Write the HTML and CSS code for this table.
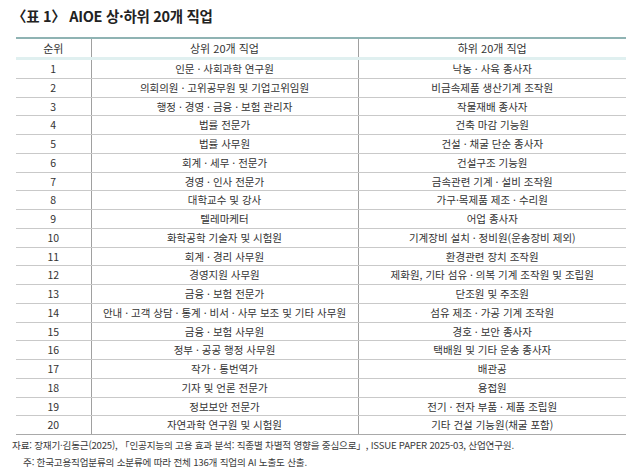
FILE: index.html
```html
<!DOCTYPE html>
<html lang="ko">
<head>
<meta charset="utf-8">
<link rel="stylesheet" href="styles.css">
</head>
<body>
<div class="page">
  <h1 class="title">〈표 1〉 AIOE 상·하위 20개 직업</h1>
  <table class="tbl">
    <colgroup><col class="c-rank"><col class="c-top"><col class="c-bot"></colgroup>
    <thead>
      <tr><th>순위</th><th>상위 20개 직업</th><th>하위 20개 직업</th></tr>
    </thead>
    <tbody>
      <tr class="first"><td>1</td><td>인문 · 사회과학 연구원</td><td>낙농 · 사육 종사자</td></tr>
      <tr><td>2</td><td>의회의원 · 고위공무원 및 기업고위임원</td><td>비금속제품 생산기계 조작원</td></tr>
      <tr><td>3</td><td>행정 · 경영 · 금융 · 보험 관리자</td><td>작물재배 종사자</td></tr>
      <tr><td>4</td><td>법률 전문가</td><td>건축 마감 기능원</td></tr>
      <tr><td>5</td><td>법률 사무원</td><td>건설 · 채굴 단순 종사자</td></tr>
      <tr><td>6</td><td>회계 · 세무 · 전문가</td><td>건설구조 기능원</td></tr>
      <tr><td>7</td><td>경영 · 인사 전문가</td><td>금속관련 기계 · 설비 조작원</td></tr>
      <tr><td>8</td><td>대학교수 및 강사</td><td>가구·목제품 제조 · 수리원</td></tr>
      <tr><td>9</td><td>텔레마케터</td><td>어업 종사자</td></tr>
      <tr><td>10</td><td>화학공학 기술자 및 시험원</td><td>기계장비 설치 · 정비원(운송장비 제외)</td></tr>
      <tr><td>11</td><td>회계 · 경리 사무원</td><td>환경관련 장치 조작원</td></tr>
      <tr><td>12</td><td>경영지원 사무원</td><td>제화원, 기타 섬유 · 의복 기계 조작원 및 조립원</td></tr>
      <tr><td>13</td><td>금융 · 보험 전문가</td><td>단조원 및 주조원</td></tr>
      <tr><td>14</td><td>안내 · 고객 상담 · 통계 · 비서 · 사무 보조 및 기타 사무원</td><td>섬유 제조 · 가공 기계 조작원</td></tr>
      <tr><td>15</td><td>금융 · 보험 사무원</td><td>경호 · 보안 종사자</td></tr>
      <tr><td>16</td><td>정부 · 공공 행정 사무원</td><td>택배원 및 기타 운송 종사자</td></tr>
      <tr><td>17</td><td>작가 · 통번역가</td><td>배관공</td></tr>
      <tr><td>18</td><td>기자 및 언론 전문가</td><td>용접원</td></tr>
      <tr><td>19</td><td>정보보안 전문가</td><td>전기 · 전자 부품 · 제품 조립원</td></tr>
      <tr><td>20</td><td>자연과학 연구원 및 시험원</td><td>기타 건설 기능원(채굴 포함)</td></tr>
    </tbody>
  </table>
  <p class="note">자료: 장재기·김동근(2025), 「인공지능의 고용 효과 분석: 직종별 차별적 영향을 중심으로」, ISSUE PAPER 2025-03, 산업연구원.</p>
  <p class="note sub">주: 한국고용직업분류의 소분류에 따라 전체 136개 직업의 AI 노출도 산출.</p>
</div>
</body>
</html>
```

FILE: styles.css
```css
html, body {
  margin: 0;
  padding: 0;
  background: #ffffff;
}
body {
  font-family: "Noto Sans CJK KR", "Noto Sans", sans-serif;
  color: #2b2b2b;
}
.page {
  width: 640px;
  height: 470px;
  padding: 6px 14px 0 12px;
  box-sizing: border-box;
}
.title {
  margin: 0;
  font-size: 14.5px;
  line-height: 20px;
  font-weight: 600;
  color: #222;
  letter-spacing: -0.3px;
}
.tbl {
  margin: 11px 0 0 4px;
  width: 610px;
  border-collapse: collapse;
  table-layout: fixed;
  font-size: 10.5px;
  color: #333;
}
.c-rank { width: 75px; }
.c-top { width: 267px; }
.c-bot { width: 268px; }
.tbl th, .tbl td {
  padding: 0;
  text-align: center;
  white-space: nowrap;
  border-left: 1px solid #a0a0a0;
}
.tbl th:first-child, .tbl td:first-child {
  border-left: none;
}
.tbl th {
  font-weight: 400;
  font-size: 11px;
  height: 18px;
  line-height: 18px;
  border-top: 2px solid #8fb3b3;
  border-bottom: 2px solid #7fa6a6;
  color: #333;
}
.tbl td {
  height: 17.75px;
  line-height: 17.75px;
  border-bottom: 1px solid #c9c9c9;
}
.tbl tr.first td {
  border-top: 3px solid #e0f0f0;
}
.tbl tbody tr:last-child td {
  border-bottom: 1px solid #a9a9a9;
}
.note {
  margin: 3px 0 0 0;
  font-size: 9.6px;
  line-height: 14px;
  color: #3a3a3a;
  letter-spacing: -0.2px;
}
.note.sub {
  margin-top: 3px;
  padding-left: 11px;
}
```
